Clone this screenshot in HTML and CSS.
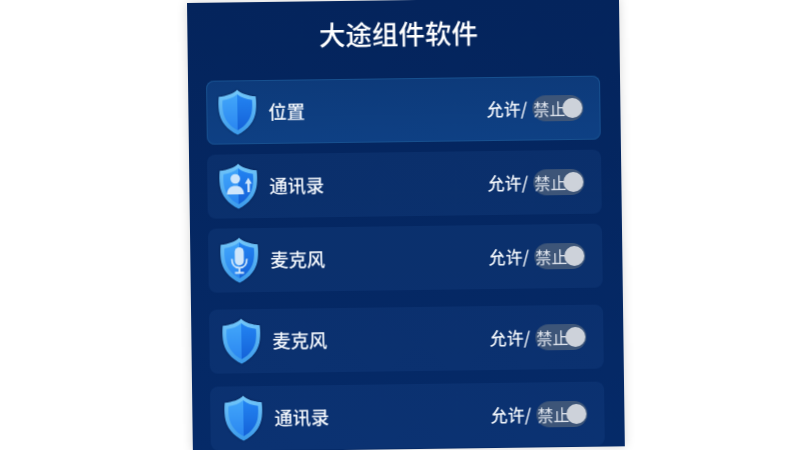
FILE: index.html
```html
<!DOCTYPE html>
<html>
<head>
  <title>大途组件软件</title>
  <link rel="stylesheet" href="styles.css">
</head>
<body>
  <svg class="defs" width="0" height="0">
    <defs>
      <linearGradient id="rim" x1="0" y1="0" x2="0" y2="1">
        <stop offset="0" stop-color="#74c8fa"/>
        <stop offset="1" stop-color="#3a9aea"/>
      </linearGradient>
      <linearGradient id="faceLeft" x1="0" y1="0" x2="0" y2="1">
        <stop offset="0" stop-color="#42a6fa"/>
        <stop offset="1" stop-color="#2a86f0"/>
      </linearGradient>
      <linearGradient id="faceRight" x1="0" y1="0" x2="0" y2="1">
        <stop offset="0" stop-color="#2384f2"/>
        <stop offset="1" stop-color="#1462d8"/>
      </linearGradient>
      <symbol id="shield" viewBox="0 0 38 46">
        <path d="M19 0.5C23.5 4.5 29.5 6.6 37.5 7.2C38 12 38 17 37.5 21.5C36.3 32 29.5 40.5 19 45.5C8.5 40.5 1.7 32 0.5 21.5C0 17 0 12 0.5 7.2C8.5 6.6 14.5 4.5 19 0.5Z" fill="url(#rim)"/>
        <path d="M19 5C15 8.2 10 10.2 4.3 10.8C4 14.5 4 18 4.5 21.5C5.5 30 11 36.8 19 41Z" fill="url(#faceLeft)"/>
        <path d="M19 5C23 8.2 28 10.2 33.7 10.8C34 14.5 34 18 33.5 21.5C32.5 30 27 36.8 19 41Z" fill="url(#faceRight)"/>
      </symbol>
    </defs>
  </svg>

  <div class="panel">
    <h1 class="title">大途组件软件</h1>

    <div class="row row-active">
      <svg class="shield" width="38" height="46"><use href="#shield"/></svg>
      <span class="label">位置</span>
      <span class="allow">允许/</span>
      <div class="toggle"><span>禁止</span><i class="knob"></i></div>
    </div>

    <div class="row row-second">
      <svg class="shield" width="38" height="46" viewBox="0 0 38 46">
        <use href="#shield" width="38" height="46"/>
        <circle cx="16" cy="15.5" r="4.8" fill="#cfe6fb"/>
        <path d="M7.5 31C7.5 25 11.5 22.5 16 22.5C20.5 22.5 24.5 25 24.5 31Z" fill="#cfe6fb"/>
        <path d="M29 14.5L32.5 20.5H30.4V29H28V20.5H25.5Z" fill="#cfe6fb"/>
      </svg>
      <span class="label">通讯录</span>
      <span class="allow">允许/</span>
      <div class="toggle"><span>禁止</span><i class="knob"></i></div>
    </div>

    <div class="row row-third">
      <svg class="shield" width="38" height="46" viewBox="0 0 38 46">
        <use href="#shield" width="38" height="46"/>
        <rect x="14.5" y="10" width="9" height="18" rx="4.5" fill="#cfe6fb"/>
        <path d="M11.5 21.5C11.5 27 14.5 30.5 19 30.5C23.5 30.5 26.5 27 26.5 21.5" fill="none" stroke="#cfe6fb" stroke-width="1.8"/>
        <path d="M19 30.5V35M14.5 35.5H23.5" fill="none" stroke="#cfe6fb" stroke-width="1.8"/>
      </svg>
      <span class="label">麦克风</span>
      <span class="allow">允许/</span>
      <div class="toggle"><span>禁止</span><i class="knob"></i></div>
    </div>

    <div class="row row-fourth">
      <svg class="shield" width="38" height="46"><use href="#shield"/></svg>
      <span class="label">麦克风</span>
      <span class="allow">允许/</span>
      <div class="toggle"><span>禁止</span><i class="knob"></i></div>
    </div>

    <div class="row row-fifth">
      <svg class="shield" width="38" height="46"><use href="#shield"/></svg>
      <span class="label">通讯录</span>
      <span class="allow">允许/</span>
      <div class="toggle"><span>禁止</span><i class="knob"></i></div>
    </div>
  </div>
</body>
</html>
```

FILE: styles.css
```css
html, body {
  margin: 0;
  height: 100%;
  overflow: hidden;
}
body {
  background-color: #fff;
  font-family: "Noto Sans CJK SC", "Noto Sans", sans-serif;
  padding: 3px 0 0 187px;
  box-sizing: border-box;
}
.defs {
  display: block;
  height: 0;
}
.panel {
  width: 432px;
  height: 449px;
  box-sizing: border-box;
  padding: 0 20px 0 18px;
  background: linear-gradient(180deg, #04245c 0%, #052a68 100%);
  box-shadow: 0 0 10px rgba(0, 0, 0, 0.16);
  transform: rotate(-0.75deg);
  transform-origin: top left;
  filter: blur(0.35px);
}
.title {
  margin: 0;
  height: 78px;
  padding: 11px 8px 0 0;
  box-sizing: border-box;
  color: #fff;
  font-size: 26.5px;
  line-height: 44px;
  font-weight: 500;
  text-align: center;
}
.row {
  display: flex;
  align-items: center;
  height: 64px;
  box-sizing: border-box;
  padding: 0 17px 0 12px;
  background-color: rgba(70, 130, 210, 0.1);
  border-radius: 8px;
}
.row-active {
  background: linear-gradient(180deg, #0d3a7a 0%, #0e4084 100%);
  box-shadow: inset 0 0 0 1px #17508f;
}
.row-second { margin-top: 10px; }
.row-third { margin-top: 10px; }
.row-fourth {
  margin-top: 17px;
  padding-left: 13px;
}
.row-fifth {
  margin-top: 13px;
  padding-left: 14px;
}
.shield {
  flex: none;
  filter: drop-shadow(0 0 1px rgba(2, 18, 60, 0.7));
}
.label {
  margin: 0 0 2px 12px;
  flex: 1;
  color: #f4f8fd;
  font-size: 18.3px;
  line-height: 26px;
  font-weight: 500;
}
.allow {
  color: #f2f6fb;
  font-size: 17px;
  line-height: 24px;
  font-weight: 500;
  margin-bottom: 1px;
}
.toggle {
  display: flex;
  align-items: center;
  width: 51px;
  height: 26px;
  margin-left: 5px;
  box-sizing: border-box;
  padding: 0 1px;
  border-radius: 13px;
  background-color: #3d5578;
  color: #e2e7ef;
  font-size: 16px;
  line-height: 24px;
}
.toggle span {
  width: 29px;
  flex: none;
  white-space: nowrap;
}
.knob {
  width: 20px;
  height: 20px;
  flex: none;
  border-radius: 50%;
  background-color: #cdd2da;
}
```
